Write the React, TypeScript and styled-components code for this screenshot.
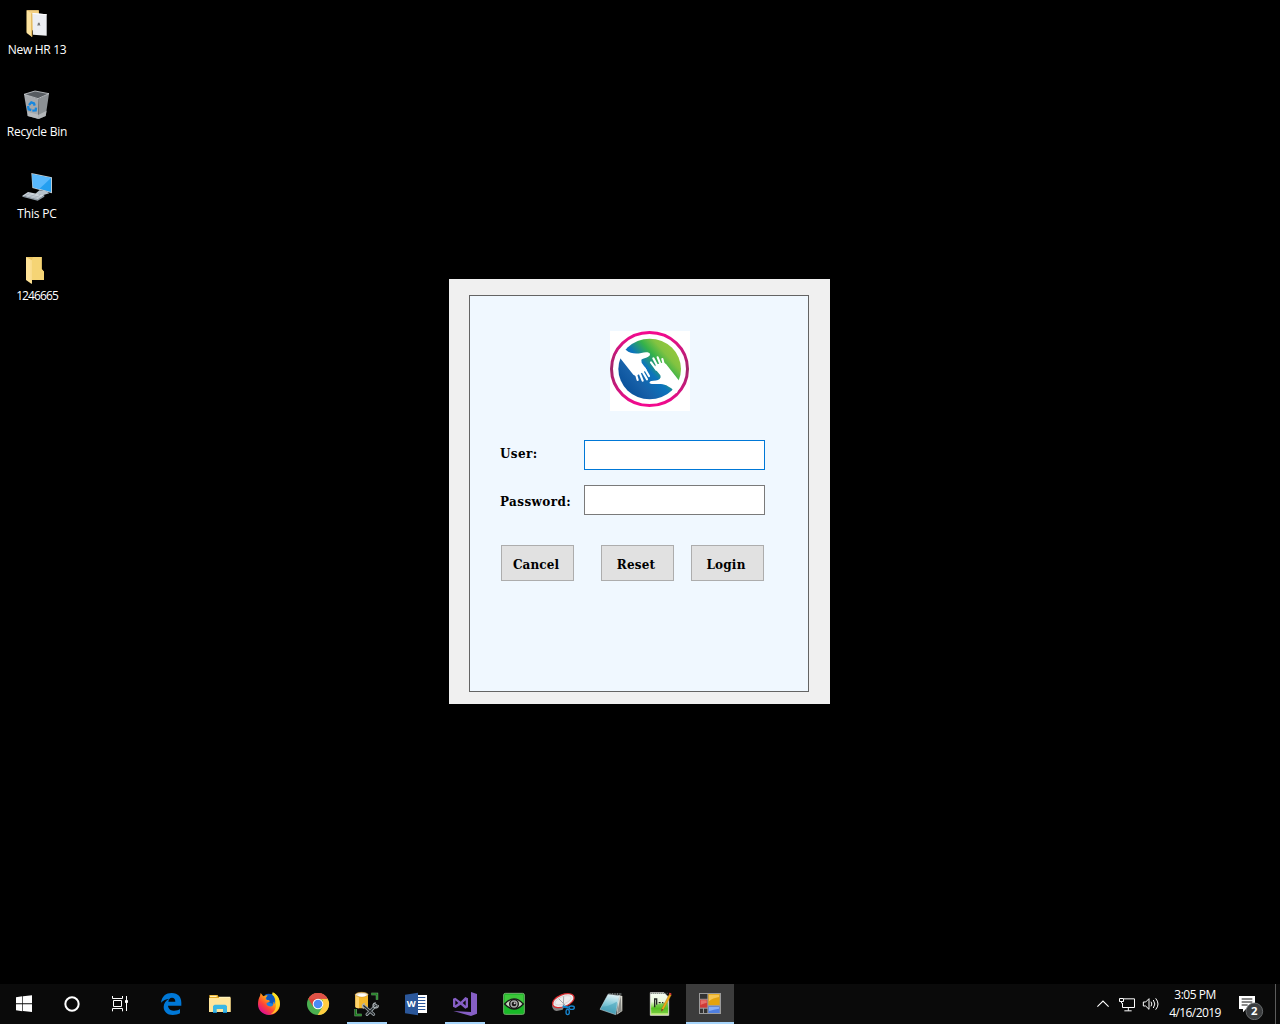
import React from "react";
import styled, { createGlobalStyle } from "styled-components";

const GlobalStyle = createGlobalStyle`
  * { box-sizing: border-box; }
  html, body { margin: 0; padding: 0; background: #000; overflow: hidden; }
  svg { display: block; flex: none; }
`;

const uiFont = `"Open Sans", "Noto Sans", sans-serif`;
const formFont = `"DejaVu Serif", serif`;

const Screen = styled.div`
  display: flex;
  flex-direction: column;
  width: 1280px;
  height: 1024px;
  background: #000;
  font-family: ${uiFont};
`;

const Desktop = styled.main`
  position: relative;
  flex: 1;
`;

const ShortcutColumn = styled.div`
  display: flex;
  flex-direction: column;
  gap: 30px;
  width: 74px;
  padding-top: 7px;
`;

const Shortcut = styled.div`
  display: flex;
  flex-direction: column;
  align-items: center;
  gap: 2px;
  height: 52px;
`;

const ShortcutLabel = styled.span<{ $spacing?: number }>`
  color: #fff;
  font-size: 12px;
  line-height: 18px;
  white-space: nowrap;
  letter-spacing: ${(p) => p.$spacing ?? -0.2}px;
`;

const LoginWindow = styled.section`
  position: absolute;
  left: 449px;
  top: 279px;
  width: 381px;
  height: 425px;
  padding: 16px 21px 12px 20px;
  background: #f0f0f0;
`;

const Panel = styled.form`
  display: flex;
  flex-direction: column;
  height: 397px;
  padding: 35px 43px 0 30px;
  border: 1px solid #646464;
  background: #f0f8ff;
`;

const Logo = styled.div`
  width: 80px;
  height: 80px;
  margin: 0 0 29px 110px;
  background: #fff;
`;

const Field = styled.label`
  display: flex;
  justify-content: space-between;
  align-items: flex-start;
  height: 45px;
`;

const FieldName = styled.span<{ $drop: number; $spacing: number }>`
  padding-top: ${(p) => p.$drop}px;
  color: #000;
  font: bold 12px/20px ${formFont};
  letter-spacing: ${(p) => p.$spacing}px;
`;

const TextInput = styled.input<{ $active?: boolean }>`
  width: 181px;
  height: 30px;
  padding: 0 6px;
  border: 1px solid ${(p) => (p.$active ? "#0078d7" : "#7a7a7a")};
  border-radius: 0;
  outline: none;
  background: #fff;
`;

const Actions = styled.div`
  display: flex;
  gap: 17px;
  padding: 15px 1px 0;
`;

const ActionButton = styled.button<{ $spacing: number; $apart?: boolean }>`
  width: 73px;
  height: 36px;
  margin-right: ${(p) => (p.$apart ? 10 : 0)}px;
  padding: 3px 3px 0 0;
  border: 1px solid #adadad;
  border-radius: 0;
  background: #e1e1e1;
  color: #000;
  font: bold 12px/20px ${formFont};
  letter-spacing: ${(p) => p.$spacing}px;
`;

const Taskbar = styled.footer`
  display: flex;
  height: 40px;
  background: #0a0a0a;
`;

const SystemButtons = styled.div`
  display: flex;
  width: 147px;
`;

const AppButtons = styled.div`
  display: flex;
  gap: 1px;
`;

const TaskButton = styled.div<{ $state?: "running" | "active" }>`
  display: flex;
  align-items: center;
  justify-content: center;
  width: 48px;
  height: 40px;
  background-color: ${(p) => (p.$state === "active" ? "#3c3c3c" : "transparent")};
  background-image: ${(p) => (p.$state ? "linear-gradient(#a6d4fa, #a6d4fa)" : "none")};
  background-position: bottom;
  background-size: ${(p) => (p.$state === "active" ? 48 : 40)}px 2px;
  background-repeat: no-repeat;
`;

const Tray = styled.div`
  display: flex;
  align-items: center;
  margin-left: auto;
`;

const TrayToggle = styled.div`
  margin-right: 6px;
`;

const Clock = styled.div`
  display: flex;
  flex-direction: column;
  align-items: center;
  width: 60px;
  margin: 0 11px 0 2px;
  color: #fff;
  font-size: 12px;
  line-height: 18px;
  white-space: nowrap;
`;

const ClockLine = styled.span<{ $spacing: number }>`
  letter-spacing: ${(p) => p.$spacing}px;
`;

const ShowDesktop = styled.div`
  width: 5px;
  height: 40px;
  margin-left: 9px;
  border-left: 1px solid #5c5c5c;
`;

type IconProps = { x: number; y?: number; w?: number; children: React.ReactNode };

/* Icons are drawn on a grid of three units to the pixel. */
const Icon = ({ x, y = 24, w = 32, children }: IconProps) => (
  <svg width={w} height={32} viewBox={`${x} ${y} ${w * 3} 96`} aria-hidden="true">
    {children}
  </svg>
);

const DocumentFolderIcon = () => (
  <Icon x={63} y={21}>
    <path d="M80 31h37v12H96v60l-16-6z" fill="#dfb763" />
    <path d="M82 31h33v60H82z" fill="#f3d083" />
    <path d="M96 39l44 4v64l-41-3z" fill="#eceef2" />
    <path d="M99 39l41 4v3l-40-4z" fill="#fff" />
    <path d="M80 31l16 10v70l-16-12z" fill="#fce3a0" />
    <path d="M93 39l4 2v70l-4-3z" fill="#e6bd62" />
    <path d="M112 77l2-9h5l2 10-3-2z" fill="#777" />
  </Icon>
);

const RecycleBinIcon = () => (
  <Icon x={63} y={267}>
    <path d="M72 283l33-10 42 8-33 15z" fill="#565b60" />
    <path d="M72 283l42 14 2 60-33-9z" fill="#a5a9ad" />
    <path d="M114 297l33-16-10 67-21 9z" fill="#8b9094" />
    <path d="M83 336l33 8 24-12-3 16-21 9-33-9z" fill="#bfc2c4" opacity=".75" />
    <path d="M72 283l33-10 42 8-33 15z" fill="none" stroke="#c8ccd0" strokeWidth="2.5" />
    <g fill="none" stroke="#1687df" strokeWidth="7">
      <path d="M87 315l7-8 8 3 2 7" />
      <path d="M84 318l2 10 8 2" />
      <path d="M97 332l10-1 1-8" />
    </g>
  </Icon>
);

const ThisPcIcon = () => (
  <Icon x={63} y={33}>
    <path d="M94 39l62 13v48L97 84z" fill="#bdcbd3" />
    <path d="M97 43l56 11v42L99 81z" fill="#249ff0" />
    <path d="M97 43l56 11-36 34-18-7z" fill="#58b8fc" />
    <path d="M118 91l19 2 11 7-20 6-22-5z" fill="#b7c2cb" />
    <path d="M84 96l49 10-20 13-46-12z" fill="#cbd3da" />
    <path d="M113 117l20-11v4l-20 12-46-12v-3z" fill="#8f9ba5" />
    <path d="M78 102l41 10M74 106l38 9M91 99l-17 9M106 103l-18 9M120 106l-17 9" stroke="#9aa7b2" strokeWidth="1.5" />
  </Icon>
);

const FolderIcon = () => (
  <Icon x={63} y={279}>
    <path d="M78 291h47v36l7 8v25H93z" fill="#edc765" />
    <path d="M95 300l5-9h25v36l7 8v25H95z" fill="#f5d475" />
    <path d="M78 291l17 10v71l-17-12z" fill="#ffe398" />
    <path d="M91 299l5 3v69l-5-4z" fill="#f9dc8d" />
  </Icon>
);

const HandsLogo = () => (
  <svg width="80" height="80" viewBox="30 33 240 240" role="img" aria-label="Joined hands">
    <defs>
      <linearGradient id="ring" x1="0" y1="0" x2="0" y2="1">
        <stop offset="0" stopColor="#f4098f" />
        <stop offset=".5" stopColor="#9f2868" />
        <stop offset="1" stopColor="#f4098f" />
      </linearGradient>
      <linearGradient id="globe" x1=".12" y1=".82" x2=".84" y2=".2">
        <stop offset="0" stopColor="#0a529c" />
        <stop offset=".22" stopColor="#1760a8" />
        <stop offset=".5" stopColor="#0b74bd" />
        <stop offset=".73" stopColor="#35b24a" />
        <stop offset=".9" stopColor="#82c341" />
        <stop offset="1" stopColor="#8dc63f" />
      </linearGradient>
    </defs>
    <ellipse cx="148.500" cy="147" rx="114" ry="109.500" fill="#fff" stroke="url(#ring)" strokeWidth="9" />
    <ellipse cx="149" cy="147" rx="94" ry="91" fill="url(#globe)" />
    <g fill="#fff" stroke="#fff" strokeLinecap="round">
      <path
        strokeWidth="0"
        d="M48 105L60 88 78 90C91 102 109 102 124 99C138 95 149 97 150 102C151 112 132 114 124 119L125 128 140 149 132 155 120 161 107 168 100 164 62 116z"
      />
      <path
        strokeWidth="0"
        d="M248 184L238 183 198 132 190 127 168 134 163 144 181 166 182 172C179 180 171 182 160 182C151 182 147 186 149 190C154 196 182 187 199 196C207 201 214 204 219 210L230 220z"
      />
      <path strokeWidth="6.500" d="M133 144L147 168M125 150L141 178M117 154L128 182M107 159L113 180" />
      <path strokeWidth="6.500" d="M169 149L153 127M175 143L160 115M184 139L173 112M192 136L187 117" />
    </g>
  </svg>
);

const StartIcon = () => (
  <Icon x={24}>
    <path fill="#fff" d="M48 52l19-3v21H48zM69 49l27-3v24H69zM48 73h19v21l-19-3zM69 73h27v23l-27-3z" />
  </Icon>
);

const CortanaIcon = () => (
  <Icon x={168}>
    <circle cx="216" cy="72" r="20" fill="none" stroke="#fff" strokeWidth="6" />
  </Icon>
);

const TaskViewIcon = () => (
  <Icon x={312}>
    <g fill="none" stroke="#fff" strokeWidth="3">
      <path d="M337.500 48v7.500h30V48M337.500 94v-8.500h30V94M340.500 61.500h24v18h-24zM379.500 48v45" />
      <path d="M375 64.500h9" strokeWidth="8" />
    </g>
  </Icon>
);

const EdgeIcon = () => (
  <Icon x={465}>
    <path
      fill="#0078d7"
      d="M483 68C486 48 498 39 515 39C535 39 544 52 544 68V77H504C505 88 514 92 523 92C530 92 536 90 540 87V100C534 104 526 105 518 105C502 105 491 95 491 81C491 70 497 61 508 56C498 57 489 61 483 68zM505 65H526C526 57 522 53 516 53C509 53 506 58 505 65z"
    />
  </Icon>
);

const ExplorerIcon = () => (
  <Icon x={12}>
    <path fill="#e7ac24" d="M28 45h25l3 6h35v45H28z" />
    <path fill="#ffe59b" d="M27 54h65v42H27z" />
    <path fill="#fff1b8" d="M30 47h20v4H30zM57 50h34v4H57z" />
    <path fill="#39b7e5" d="M39 78l5-4h32l5 4v21H69V87H50v12H39z" />
    <path fill="#1688c8" d="M39 96h11v3H39zM69 96h12v3H69z" />
  </Icon>
);

const FirefoxIcon = () => (
  <Icon x={159}>
    <defs>
      <linearGradient id="fox" x1=".8" y1=".1" x2=".2" y2=".85">
        <stop offset="0" stopColor="#ffec27" />
        <stop offset=".4" stopColor="#ff9a17" />
        <stop offset=".7" stopColor="#ff4634" />
        <stop offset="1" stopColor="#e31587" />
      </linearGradient>
    </defs>
    <circle cx="209" cy="66" r="24" fill="#1583e9" />
    <path d="M195 44C207 37 222 43 226 57L220 72 204 66z" fill="#0c57bd" />
    <path
      fill="url(#fox)"
      d="M180 48L182 39 190 49C194 46 199 46 203 46L197 55 199 59 208 61 209 65 200 69C198 73 202 78 208 79C217 81 222 75 220 65C222 67 224 71 225 72C227 59 224 49 217 44L218 37C232 43 240 57 240 72C240 91 225 105 207 105C188 105 174 91 174 73C174 63 176 55 180 48z"
    />
    <path d="M218 38C232 43 240 57 239 74C236 92 224 101 211 103C225 94 230 83 227 68C232 58 226 49 217 44z" fill="#ffe026" opacity=".8" />
  </Icon>
);

const ChromeIcon = () => (
  <Icon x={306}>
    <circle cx="354" cy="72" r="33" fill="#4aaf50" />
    <path fill="#db4437" d="M325 56A33 33 0 0 1 383 56L354 56 340 81z" />
    <path fill="#ffcd40" d="M383 56A33 33 0 0 1 353 105L368 80 368 60 354 56z" />
    <path fill="#df5146" d="M325 56A33 33 0 0 1 383 56H354z" />
    <circle cx="354" cy="72" r="16" fill="#fff" />
    <circle cx="354" cy="72" r="13" fill="#4a8af4" />
  </Icon>
);

const SqlStudioIcon = () => (
  <Icon x={453}>
    <path d="M466 43v37c0 6 38 7 38 0V43z" fill="#f3b72c" />
    <path d="M466 43v37c0 4 8 5 11 5V47z" fill="#ffd36b" />
    <ellipse cx="485" cy="44" rx="19" ry="7" fill="#e9e1d3" stroke="#d99c25" strokeWidth="2" />
    <ellipse cx="486" cy="46" rx="12" ry="4" fill="#fff" />
    <g fill="none">
      <path d="M514 42h17v17M467 87v18h18" stroke="#84bd80" strokeWidth="7" />
      <path d="M514 42h17v17M467 87v18h18" stroke="#17771c" strokeWidth="4" />
      <g strokeLinecap="round">
        <path d="M491 77l30 26M501 103l27-27" stroke="#9da5aa" strokeWidth="9" />
        <path d="M491 77l30 26M501 103l27-27" stroke="#252a2d" strokeWidth="4" />
        <path d="M490 84c-5-5-3-11 3-13M526 69c-8 1-9 9-4 13 7 4 13 0 13-5" stroke="#a9afb3" strokeWidth="4" />
      </g>
    </g>
  </Icon>
);

const WordIcon = () => (
  <Icon x={30}>
    <path d="M79 45h32v54H79z" fill="#fff" />
    <path d="M84 52.500h22M84 61.500h22M84 70.500h22M84 79.500h22M84 88.500h22" stroke="#2b579a" strokeWidth="3" />
    <path d="M45 44l39-6v68l-39-6z" fill="#2b579a" />
    <text x="64" y="82" textAnchor="middle" fontFamily="Open Sans, sans-serif" fontWeight="700" fontSize="28" fill="#fff">
      W
    </text>
  </Icon>
);

const VisualStudioIcon = () => (
  <Icon x={177}>
    <path
      fill="#865fc5"
      fillRule="evenodd"
      d="M189 56L196 53 212 65 226 51 234 55V82L226 86 212 74 197 84 189 80zM196 61v15l9-7zM218 69l9 8V61z"
    />
    <path fill="#865fc5" d="M243 36l18 6v59l-18 7-53-15 53 3z" />
  </Icon>
);

const EyeIcon = () => (
  <Icon x={324}>
    <rect x="341" y="40" width="62" height="63" rx="5" fill="#18b927" stroke="#75ae6d" strokeWidth="3" />
    <path d="M345 44h54v30c-19-10-36-9-54 1z" fill="#6dd853" opacity=".45" />
    <path d="M344 72Q372 41 400 72Q372 102 344 72z" fill="#c6d4bd" stroke="#171917" strokeWidth="4" />
    <circle cx="372" cy="72" r="13" fill="#aaa" stroke="#161616" strokeWidth="4" />
    <circle cx="372" cy="72" r="7" fill="#161616" />
    <circle cx="374" cy="70" r="3" fill="#ccc" />
  </Icon>
);

const SnippingIcon = () => (
  <Icon x={471}>
    <path d="M486 75c0 10 5 17 14 18l18-4 8-17z" fill="#858585" />
    <ellipse cx="520" cy="62" rx="34" ry="18" transform="rotate(-22 520 62)" fill="#eeeced" stroke="#d92b2e" strokeWidth="3.500" />
    <ellipse cx="519" cy="61" rx="26" ry="11" transform="rotate(-22 519 61)" fill="none" stroke="#ccc" strokeWidth="2" />
    <path d="M506 56l28 28M521 49l-1 33" stroke="#a3a8ac" strokeWidth="3" />
    <path d="M518 79l18 4" stroke="#0e82ca" strokeWidth="7" />
    <ellipse cx="545" cy="83" rx="8" ry="5" fill="none" stroke="#1685d0" strokeWidth="4" />
    <ellipse cx="533" cy="96" rx="5" ry="8" fill="none" stroke="#1685d0" strokeWidth="4" />
  </Icon>
);

const NotepadIcon = () => (
  <Icon x={48}>
    <defs>
      <linearGradient id="pad" x1=".6" y1="0" x2=".4" y2="1">
        <stop offset="0" stopColor="#e1f2f6" />
        <stop offset=".5" stopColor="#80c8d8" />
        <stop offset="1" stopColor="#388da5" />
      </linearGradient>
    </defs>
    <path d="M116 45l11 3v45l-17 11z" fill="#d8d8cf" />
    <path d="M122 48l3 45-14 8z" fill="#8a8c88" />
    <path d="M84 43l34 4-11 57-47-16z" fill="url(#pad)" stroke="#d6e5e8" strokeWidth="1.500" />
    <path d="M66 80c19-1 30-8 45-15l-5 35-43-13z" fill="#49a3ba" opacity=".6" />
    <path d="M86 42h38" stroke="#8e9696" strokeWidth="5" strokeDasharray="3 2" />
  </Icon>
);

const EditorIcon = () => (
  <Icon x={195}>
    <defs>
      <linearGradient id="sheet" x1="0" y1="0" x2="0" y2="1">
        <stop offset="0" stopColor="#f8fff5" />
        <stop offset=".4" stopColor="#eaf8dc" />
        <stop offset=".7" stopColor="#69cf28" />
        <stop offset="1" stopColor="#c8ed86" />
      </linearGradient>
    </defs>
    <path d="M211 38h41l14 14v54h-55z" fill="url(#sheet)" stroke="#e3e3df" strokeWidth="2.500" />
    <path d="M212 40h51" stroke="#56605a" strokeWidth="4" strokeDasharray="3 3" />
    <path d="M215 84c16-13 31-13 49-17v32h-49z" fill="#47b81e" opacity=".55" />
    <path d="M224 82V57h6v17M236 68h6M246 68h4" fill="none" stroke="#252925" strokeWidth="4" />
    <path d="M268 42l6 3-24 45-6 4 1-8z" fill="#efac18" stroke="#8e6017" />
    <path d="M268 38l6 2v6l-7-4z" fill="#de3836" />
    <path d="M245 86l5 3-6 5z" fill="#454034" />
  </Icon>
);

const FormAppIcon = () => (
  <Icon x={342}>
    <path d="M357 39h66v63h-66z" fill="#9b9b9b" />
    <path d="M360 42h22v14h-22zM360 86h9v13h-9zM372 86h10v13h-10z" fill="#333" />
    <path d="M360 59h22v24h-22z" fill="#cf3a36" />
    <path d="M362 61h18v8c-7 0-12 3-18 6z" fill="#e5706a" />
    <path d="M385 42h34v33h-34z" fill="#e3a30f" />
    <path d="M387 44h30v7c-12 2-23 6-30 13z" fill="#f6c551" />
    <path d="M385 79h34v20h-34z" fill="#4f7fe0" />
    <path d="M387 81h30v5c-12 2-20 4-30 7z" fill="#86aef8" />
  </Icon>
);

const ChevronIcon = () => (
  <Icon x={51} w={12}>
    <path d="M52 80l17-17 17 17" fill="none" stroke="#fff" strokeWidth="3.500" />
  </Icon>
);

const NetworkIcon = () => (
  <Icon x={105} w={24}>
    <g fill="none" stroke="#fff" strokeWidth="3">
      <path d="M132 56.500h31.500v26H127.500V69M145 83v9M133 92.500h22" />
      <path d="M118.500 55.500h12v9h-12zM124.500 65v5" />
    </g>
  </Icon>
);

const SpeakerIcon = () => (
  <Icon x={177} w={24}>
    <g fill="none" stroke="#fff" strokeWidth="3">
      <path d="M190 66h7l10-10v32l-10-10h-7z" />
      <path d="M213 65q5 7 0 14M220 60q9 12 0 24M227 55q14 17 0 34" />
    </g>
  </Icon>
);

const NotificationIcon = () => (
  <Icon x={468} w={30}>
    <path d="M477 48h48v39h-27l-9 10V87h-12z" fill="#fff" />
    <path d="M485 57h32M485 66h32M485 75h18" stroke="#111" strokeWidth="3" />
    <circle cx="523" cy="94" r="25" fill="#3b3d3f" stroke="#73777a" strokeWidth="2.500" />
    <text x="523" y="105" textAnchor="middle" fontFamily="Open Sans, sans-serif" fontWeight="700" fontSize="34" fill="#fff">
      2
    </text>
  </Icon>
);

const shortcuts = [
  { name: "New HR 13", icon: <DocumentFolderIcon />, spacing: -0.3 },
  { name: "Recycle Bin", icon: <RecycleBinIcon />, spacing: -0.2 },
  { name: "This PC", icon: <ThisPcIcon />, spacing: -0.15 },
  { name: "1246665", icon: <FolderIcon />, spacing: -0.9 },
];

const apps: { icon: React.ReactNode; state?: "running" | "active" }[] = [
  { icon: <EdgeIcon /> },
  { icon: <ExplorerIcon /> },
  { icon: <FirefoxIcon /> },
  { icon: <ChromeIcon /> },
  { icon: <SqlStudioIcon />, state: "running" },
  { icon: <WordIcon /> },
  { icon: <VisualStudioIcon />, state: "running" },
  { icon: <EyeIcon /> },
  { icon: <SnippingIcon /> },
  { icon: <NotepadIcon /> },
  { icon: <EditorIcon /> },
  { icon: <FormAppIcon />, state: "active" },
];

export default function App() {
  return (
    <Screen>
      <GlobalStyle />
      <Desktop>
        <ShortcutColumn>
          {shortcuts.map((s) => (
            <Shortcut key={s.name}>
              {s.icon}
              <ShortcutLabel $spacing={s.spacing}>{s.name}</ShortcutLabel>
            </Shortcut>
          ))}
        </ShortcutColumn>
        <LoginWindow>
          <Panel onSubmit={(e) => e.preventDefault()}>
            <Logo>
              <HandsLogo />
            </Logo>
            <Field>
              <FieldName $drop={4} $spacing={0.4}>User:</FieldName>
              <TextInput $active />
            </Field>
            <Field>
              <FieldName $drop={7} $spacing={0.4}>Password:</FieldName>
              <TextInput type="password" />
            </Field>
            <Actions>
              <ActionButton type="button" $spacing={0.1} $apart>Cancel</ActionButton>
              <ActionButton type="reset" $spacing={0.2}>Reset</ActionButton>
              <ActionButton type="submit" $spacing={0.2}>Login</ActionButton>
            </Actions>
          </Panel>
        </LoginWindow>
      </Desktop>
      <Taskbar>
        <SystemButtons>
          <TaskButton><StartIcon /></TaskButton>
          <TaskButton><CortanaIcon /></TaskButton>
          <TaskButton><TaskViewIcon /></TaskButton>
        </SystemButtons>
        <AppButtons>
          {apps.map((app, i) => (
            <TaskButton key={i} $state={app.state}>{app.icon}</TaskButton>
          ))}
        </AppButtons>
        <Tray>
          <TrayToggle><ChevronIcon /></TrayToggle>
          <NetworkIcon />
          <SpeakerIcon />
          <Clock>
            <ClockLine $spacing={-0.5}>3:05 PM</ClockLine>
            <ClockLine $spacing={-0.6}>4/16/2019</ClockLine>
          </Clock>
          <NotificationIcon />
          <ShowDesktop />
        </Tray>
      </Taskbar>
    </Screen>
  );
}
